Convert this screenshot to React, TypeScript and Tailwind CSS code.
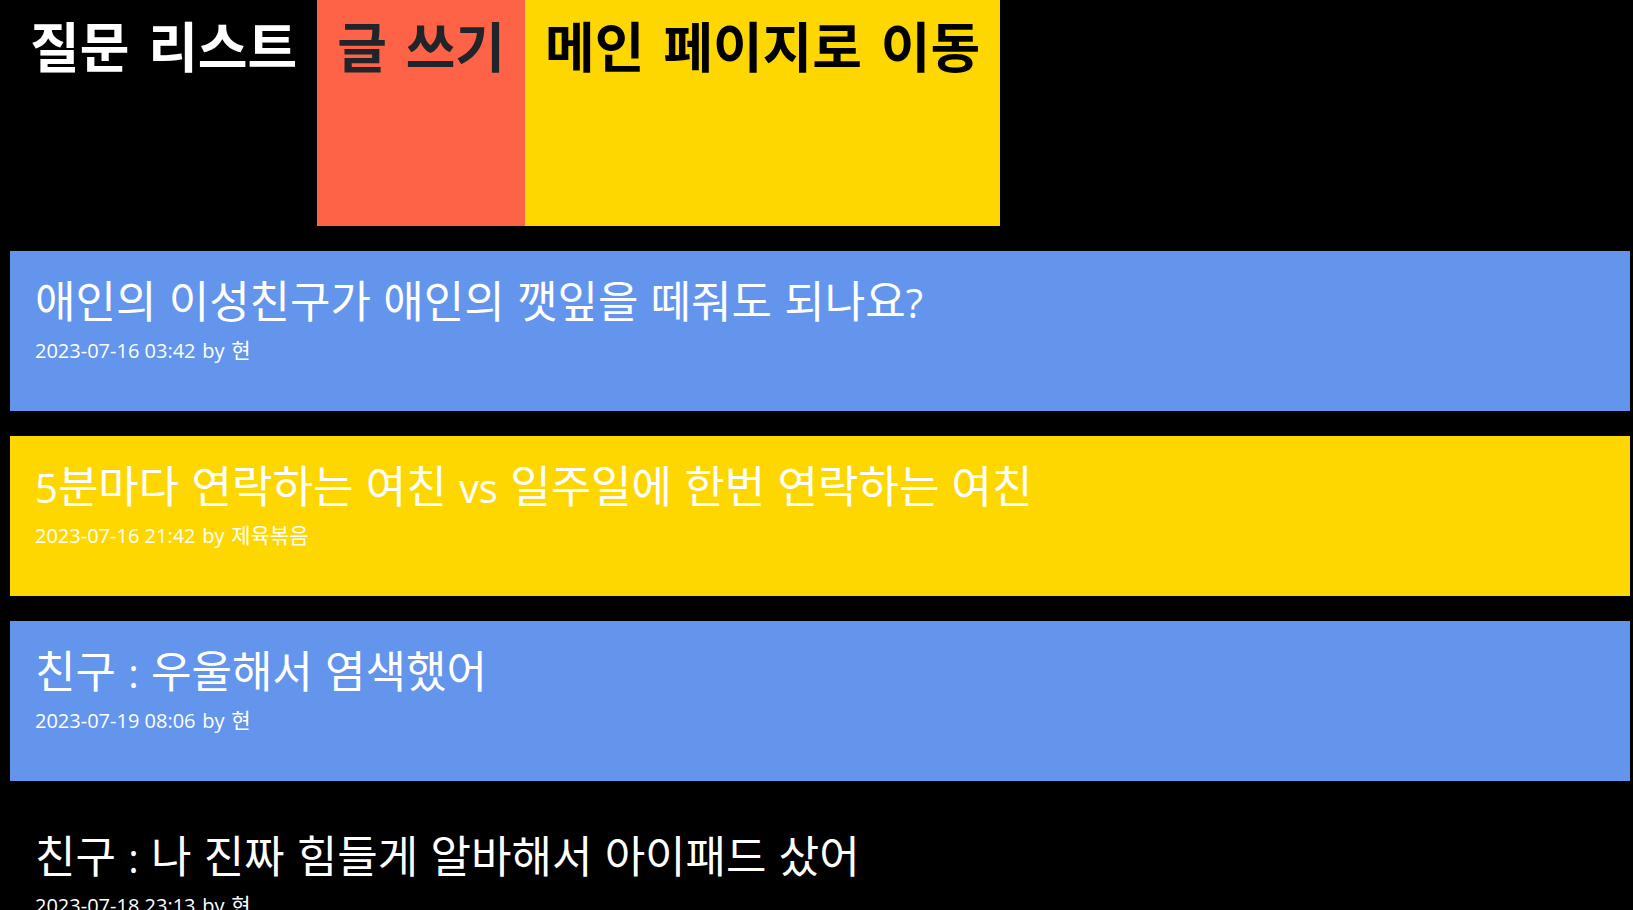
import React from "react";

type Question = {
  id: number;
  title: string;
  date: string;
  author: string;
  tone: string;
};

const questions: Question[] = [
  { id: 1, title: "애인의 이성친구가 애인의 깻잎을 떼줘도 되나요?", date: "2023-07-16 03:42", author: "현", tone: "bg-[#6495ed]" },
  { id: 2, title: "5분마다 연락하는 여친 vs 일주일에 한번 연락하는 여친", date: "2023-07-16 21:42", author: "제육볶음", tone: "bg-[#ffd700]" },
  { id: 3, title: "친구 : 우울해서 염색했어", date: "2023-07-19 08:06", author: "현", tone: "bg-[#6495ed]" },
  { id: 4, title: "친구 : 나 진짜 힘들게 알바해서 아이패드 샀어", date: "2023-07-18 23:13", author: "현", tone: "bg-black" },
];

/** Sets Latin runs inside a Korean title in their own typeface. */
function MixedText({ text }: { text: string }) {
  return (
    <>
      {text.split(/([\w?:]+)/).map((part, i) =>
        i % 2 === 1 ? (
          <span key={i} className="font-['Open_Sans'] text-[40px]">
            {part}
          </span>
        ) : (
          part
        ),
      )}
    </>
  );
}

function QuestionRow({ question }: { question: Question }) {
  return (
    <li className={`h-40 p-[25px] text-white ${question.tone}`}>
      <a href={`#question-${question.id}`} className="block">
        <h2 className="font-['Liberation_Sans','Noto_Sans_CJK_KR',sans-serif] text-[44px] leading-[54px] whitespace-nowrap">
          <MixedText text={question.title} />
        </h2>
        <p className="text-[21px] leading-[42px]">
          <time className="font-['Open_Sans'] text-[20px] font-medium">{question.date}</time>{" "}
          <span className="font-['Open_Sans'] text-[20px] font-medium">by</span> {question.author}
        </p>
      </a>
    </li>
  );
}

export default function App() {
  return (
    <div className="min-h-screen bg-black font-['DejaVu_Sans','Noto_Sans_CJK_KR',sans-serif]">
      <header className="flex h-[226px] pl-[10px] text-[54px] leading-[100px] font-bold whitespace-nowrap">
        <h1 className="px-5 text-white">질문 리스트</h1>
        <a href="#write" className="bg-[#ff6347] px-5 text-[#212529]">
          글 쓰기
        </a>
        <a href="#main" className="bg-[#ffd700] px-5 text-black">
          메인 페이지로 이동
        </a>
      </header>
      <ul className="flex flex-col gap-[25px] pt-[25px] pr-[3px] pl-[10px]">
        {questions.map((question) => (
          <QuestionRow key={question.id} question={question} />
        ))}
      </ul>
    </div>
  );
}
